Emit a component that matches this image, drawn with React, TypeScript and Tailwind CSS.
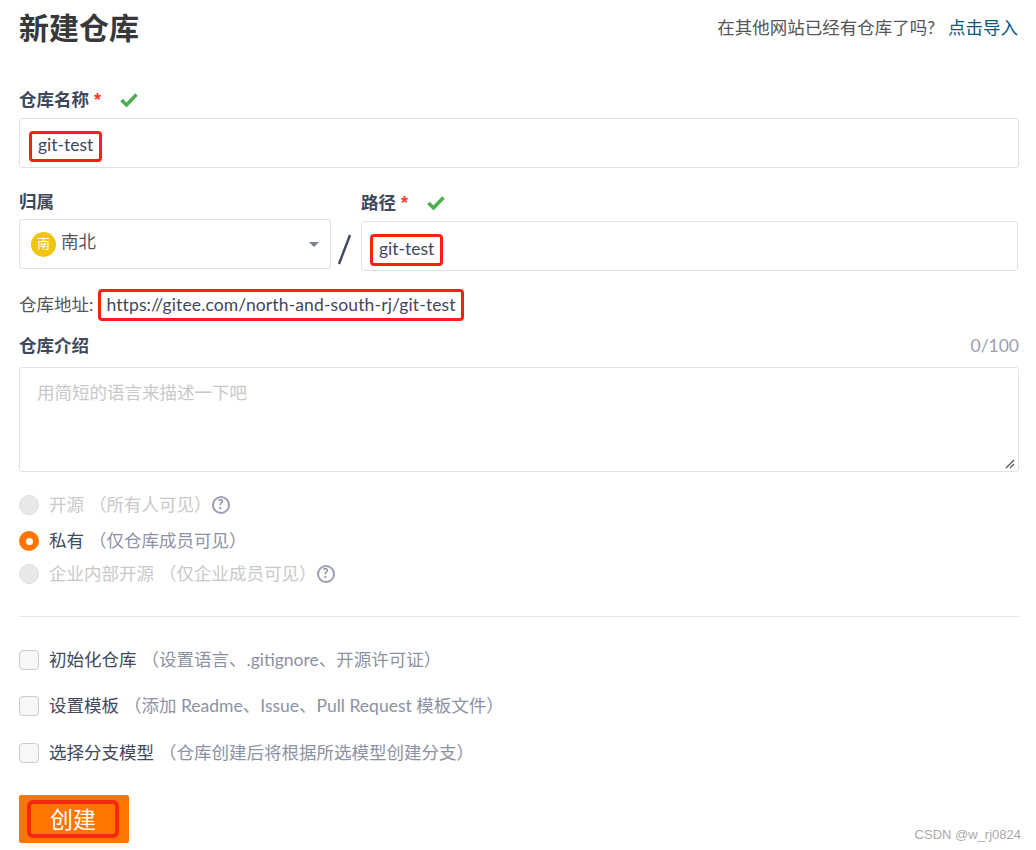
const Check = () => (
    <svg width="20" height="16" viewBox="0 0 20 16" className="block">
        <path d="M2.5 8 L7.5 13 L17.5 2.5" fill="none" stroke="#4caf50" strokeWidth="3.6" />
    </svg>
);

const Help = () => (
    <span className="w-[18px] h-[18px] rounded-full border-2 border-[#9a9fb5] text-[#8c92a4] text-[13px] font-bold flex items-center justify-center">?</span>
);

const Star = () => (
    <span className="ml-[5px] text-[#ff3b30] font-['Liberation_Sans',sans-serif] text-[18px]">*</span>
);

const Marked = ({ text, className }: { text: string; className: string }) => (
    <span className={`inline-flex items-center border-[3px] border-[#ff2015] rounded-[4px] ${className}`}>{text}</span>
);

const Radio = ({ label, note, checked, help, className }: { label: string; note: string; checked?: boolean; help?: boolean; className: string }) => (
    <div className={`flex items-center h-[24px] ${className}`}>
        {checked ? (
            <span className="w-[20px] h-[20px] rounded-full bg-[#ff7500] flex items-center justify-center">
                <span className="w-[7px] h-[7px] rounded-full bg-white" />
            </span>
        ) : (
            <span className="w-[20px] h-[20px] rounded-full bg-[#e8e8e8] border border-[#dedede]" />
        )}
        <span className={`ml-[10px] ${checked ? 'text-[#40485b]' : 'text-[#c9c9c9]'}`}>{label}</span>
        <span className={`ml-[5px] ${checked ? 'text-[#8c92a4]' : 'text-[#c9c9c9]'}`}>（{note}）</span>
        {help && <Help />}
    </div>
);

const CheckRow = ({ label, note, className }: { label: string; note: string; className: string }) => (
    <div className={`flex items-center h-[24px] ${className}`}>
        <span className="w-[20px] h-[20px] rounded-[4px] border border-[#c8ccd4] bg-[#f7f7f7]" />
        <span className="ml-[10px] text-[#40485b]">{label}</span>
        <span className="ml-[5px] text-[#8c92a4]">（{note}）</span>
    </div>
);

export default function App() {
    return (
        <div className="relative w-[1036px] h-[850px] overflow-hidden bg-white pl-[19px] pr-[17px] text-[17.5px] text-[#40485b] font-['Lato','Noto_Sans_CJK_SC',sans-serif]">
            <div className="flex items-center justify-between h-[56px]">
                <h1 className="-mt-[2px] text-[30px] font-bold text-[#383838] leading-none">新建仓库</h1>
                <div className="text-[#555] mr-[1px]">
                    在其他网站已经有仓库了吗?
                    <span className="ml-[13px] text-[#005980]">点击导入</span>
                </div>
            </div>

            <div className="flex items-center h-[24px] mt-[32px] font-bold">
                仓库名称
                <Star />
                <span className="ml-[18px]"><Check /></span>
            </div>
            <div className="flex items-center h-[50px] mt-[6px] border border-[#dfe1e8] rounded-[3px] pl-[9px]">
                <Marked text="git-test" className="h-[31px] mt-[6px] pb-[2px] px-[6px]" />
            </div>

            <div className="flex mt-[22px]">
                <div className="w-[312px]">
                    <div className="flex items-center h-[24px] font-bold">归属</div>
                    <div className="flex items-center h-[50px] mt-[5px] border border-[#dfe1e8] rounded-[3px] pl-[11px] pr-[11px]">
                        <span className="w-[25px] h-[25px] rounded-full bg-[#f1c40f] text-white text-[13px] flex items-center justify-center">南</span>
                        <span className="ml-[5px] -mt-[3px] text-[#555]">南北</span>
                        <svg width="10" height="5" viewBox="0 0 10 5" className="ml-auto">
                            <path d="M0 0 H10 L5 5 Z" fill="#7b8090" />
                        </svg>
                    </div>
                </div>
                <div className="w-[30px] pt-[43px] pl-[5px]">
                    <svg width="16" height="32" viewBox="0 0 16 32"><path d="M14 2 L3 31" stroke="#40485b" strokeWidth="2.4" /></svg>
                </div>
                <div className="flex-1 min-w-0 pr-[1px]">
                    <div className="flex items-center h-[24px] mt-[1px] font-bold">
                        路径
                        <Star />
                        <span className="ml-[18px]"><Check /></span>
                    </div>
                    <div className="flex items-center h-[50px] mt-[6px] border border-[#dfe1e8] rounded-[3px] pl-[8px]">
                        <Marked text="git-test" className="h-[32px] mt-[8px] pb-[2px] px-[6px]" />
                    </div>
                </div>
            </div>

            <div className="flex items-center h-[32px] mt-[18px]">
                <span className="text-[#555]">仓库地址:</span>
                <Marked text="https://gitee.com/north-and-south-rj/git-test" className="ml-[5px] h-[32px] px-[5px] tracking-[0.13px]" />
            </div>

            <div className="flex items-center justify-between h-[24px] mt-[13px]">
                <span className="font-bold">仓库介绍</span>
                <span className="text-[#9a9fb0]">0/100</span>
            </div>
            <div className="relative h-[105px] mt-[9px] border border-[#dfe1e8] rounded-[3px] pl-[17px] pt-[12px] text-[#c8c8c8]">
                用简短的语言来描述一下吧
                <svg width="10" height="10" viewBox="0 0 10 10" className="absolute right-[3px] bottom-[2px]">
                    <path d="M1 9 L9 1 M5 9 L9 5" stroke="#555" strokeWidth="1.2" />
                </svg>
            </div>

            <Radio label="开源" note="所有人可见" help className="mt-[21px]" />
            <Radio label="私有" note="仅仓库成员可见" checked className="mt-[12px]" />
            <Radio label="企业内部开源" note="仅企业成员可见" help className="mt-[9px]" />

            <div className="h-px bg-[#e3e6ec] mt-[30px]" />

            <CheckRow label="初始化仓库" note="设置语言、.gitignore、开源许可证" className="mt-[31px]" />
            <CheckRow label="设置模板" note="添加 Readme、Issue、Pull Request 模板文件" className="mt-[22px]" />
            <CheckRow label="选择分支模型" note="仓库创建后将根据所选模型创建分支" className="mt-[23px]" />

            <div className="flex items-center w-[110px] h-[48px] mt-[30px] pl-[8px] bg-[#ff7500] rounded-[2px]">
                <span className="flex items-center justify-center w-[92px] h-[38px] border-[4px] border-[#f5290f] rounded-[6px] text-white text-[23px]">创建</span>
            </div>

            <div className="absolute right-[15px] top-[825px] text-[13px] text-[#aaa] font-['Liberation_Sans',sans-serif]">CSDN @w_rj0824</div>
        </div>
    );
}
